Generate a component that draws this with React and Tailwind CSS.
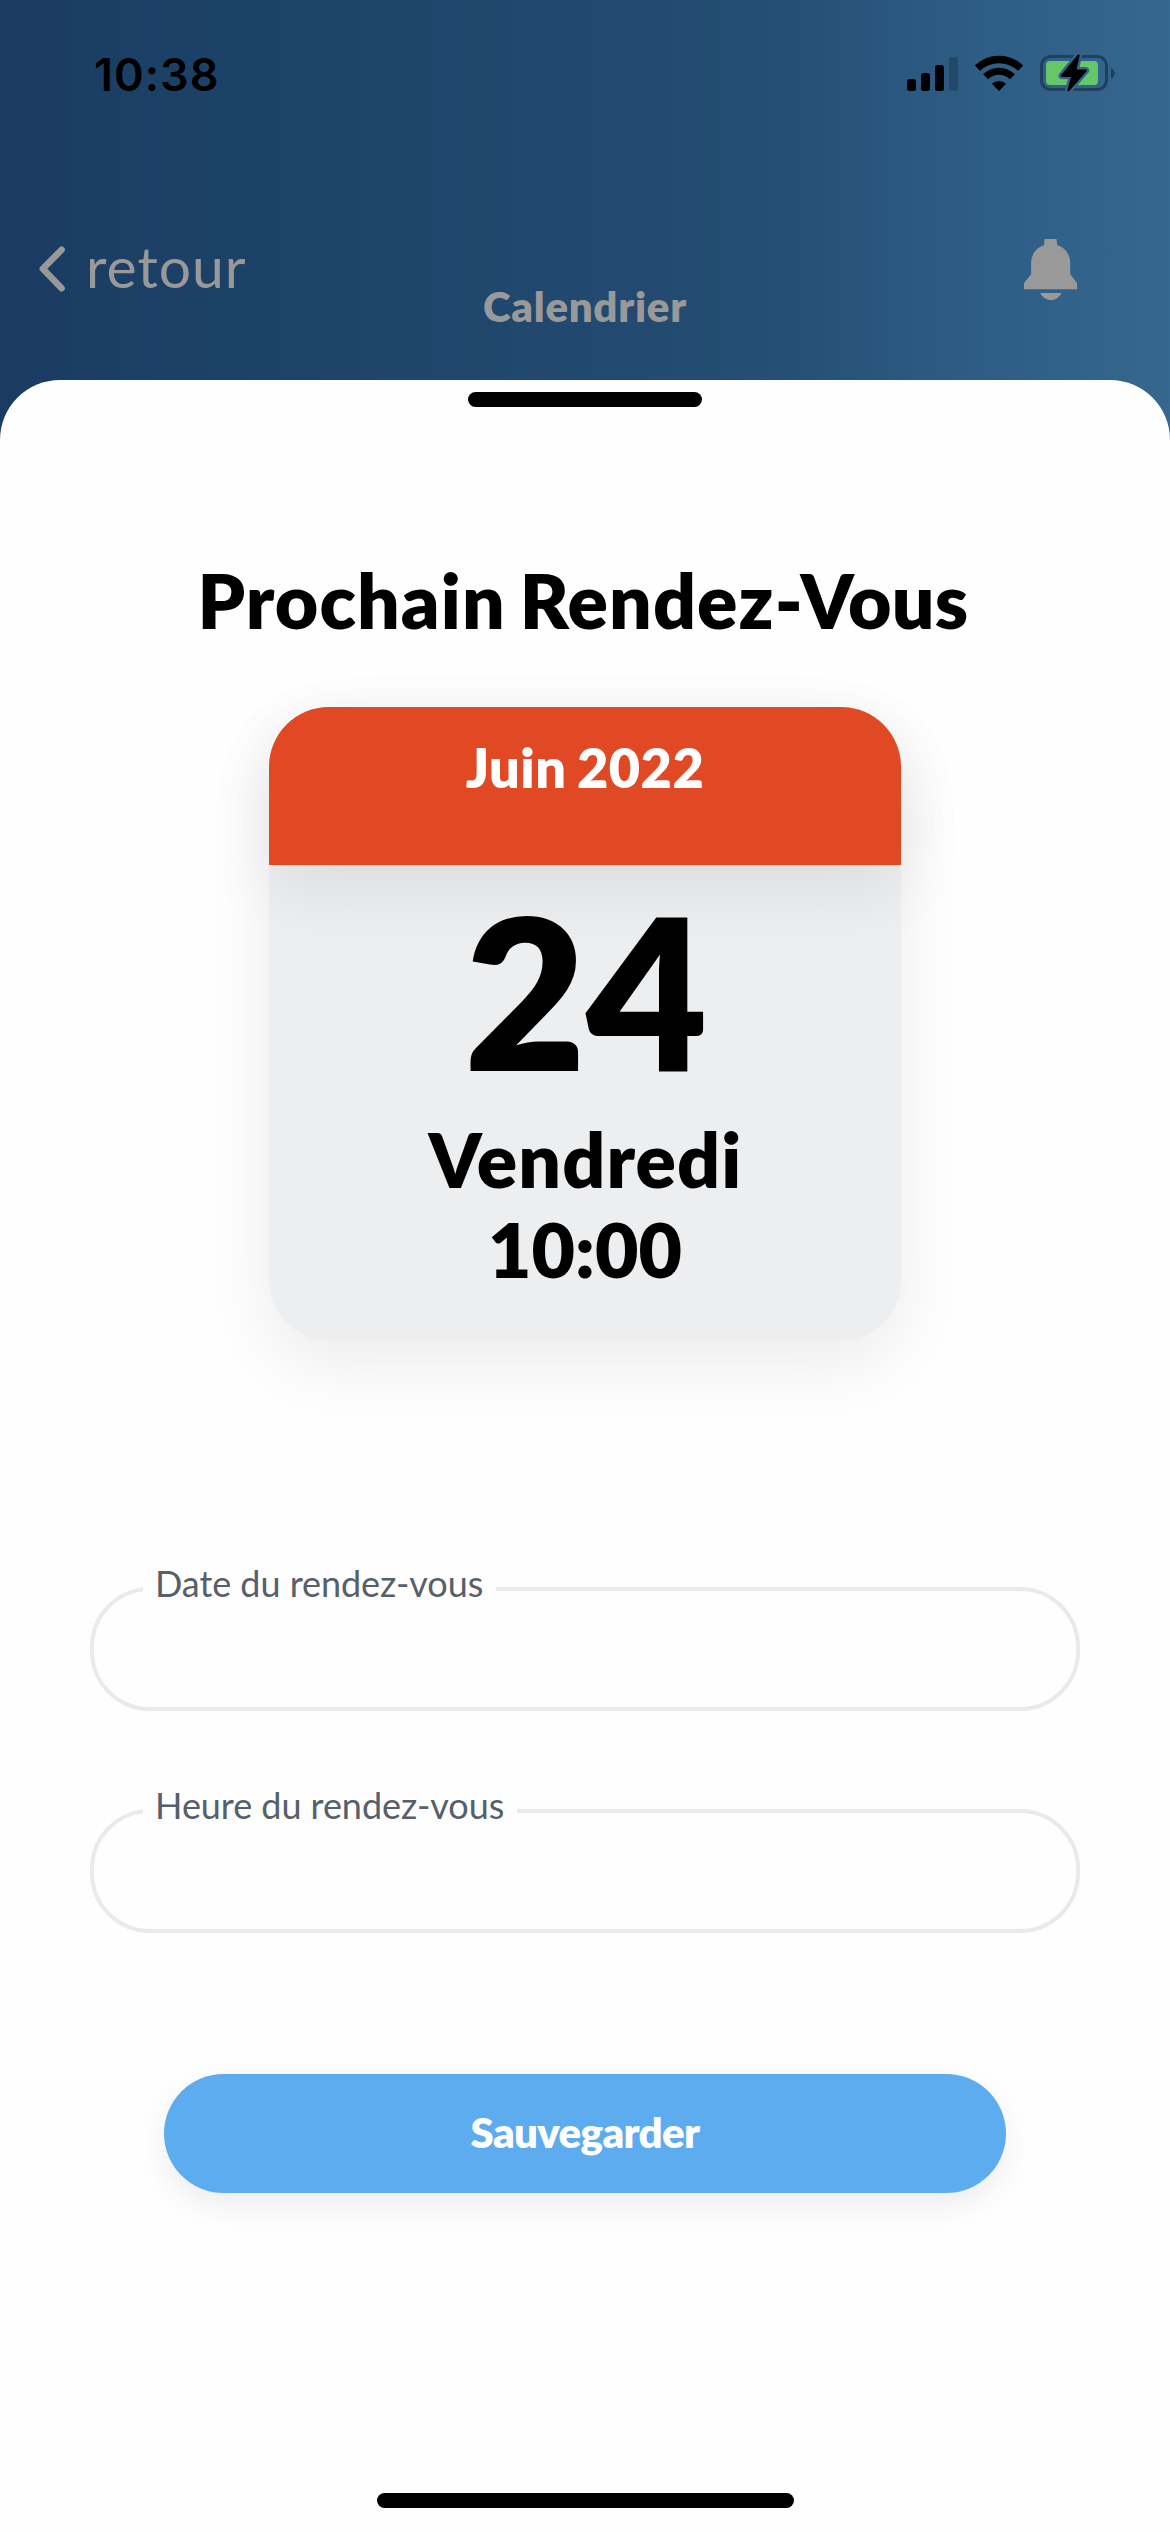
function SignalBars() {
  return (
    <svg className="h-[34px] w-[51px]" viewBox="0 0 51 34" fill="#000">
      <rect x="0" y="22" width="9" height="12" rx="2.5" />
      <rect x="14" y="16" width="9" height="18" rx="2.5" />
      <rect x="28" y="8" width="9" height="26" rx="2.5" />
      <rect x="42" y="0" width="9" height="34" rx="2.5" fill="#24486a" />
    </svg>
  );
}

function Wifi() {
  return (
    <svg className="h-9 w-[50px]" viewBox="0 0 50 36" fill="none">
      <path d="M3.4 13.2A31 31 0 0 1 46.6 13.2" stroke="#000" strokeWidth="7.4" />
      <path d="M11.6 21.8A19 19 0 0 1 38.4 21.8" stroke="#000" strokeWidth="7" />
      <path d="M25 36L17.9 28.8A10.4 10.4 0 0 1 32.1 28.8Z" fill="#000" />
    </svg>
  );
}

function Battery() {
  return (
    <svg className="h-[38px] w-[75px]" viewBox="0 0 75 38">
      <rect x="1.5" y="2.5" width="65" height="33" rx="9" fill="none" stroke="#20405e" strokeWidth="3" />
      <path d="M71 14C76 16.300 76 22.700 71 25Z" fill="#20405e" />
      <rect x="6" y="7" width="52" height="24" rx="4" fill="#67c768" />
      <path
        d="M38.600 1.500L22 21.800H32.500L28.500 36.300L45.700 16.500H35.200Z"
        fill="#000"
        stroke="#31638b"
        strokeWidth="7"
        strokeLinejoin="round"
      />
      <path
        d="M38.600 1.500L22 21.800H32.500L28.500 36.300L45.700 16.500H35.200Z"
        fill="#000"
        stroke="#000"
        strokeWidth="2.200"
        strokeLinejoin="round"
      />
    </svg>
  );
}

function Chevron() {
  return (
    <svg className="h-[46px] w-7" viewBox="0 0 28 46" fill="none">
      <path d="M23.600 3.800L4.800 22.800L23.600 42.200" stroke="#999" strokeWidth="6.500" strokeLinecap="round" strokeLinejoin="round" />
    </svg>
  );
}

function Bell() {
  return (
    <svg className="h-[61px] w-[53px]" viewBox="42 27 157 182" preserveAspectRatio="none" fill="#999">
      <path d="M103 27H138L141 46C165 53 179 75 179 100V132L199 158V177H42V158L63 132V100C63 75 77 53 101 46Z" />
      <path d="M90 188H153C146 202 135 209 121.500 209S97 202 90 188Z" />
    </svg>
  );
}

function Field({ label }) {
  return (
    <div className="relative h-[124px] rounded-[60px] border-4 border-[#e8ebed]">
      <label className="absolute -top-[29px] left-[49px] bg-[#fefefe] pr-[13px] pl-3 text-[36px] leading-[43px] tracking-[-0.050px] whitespace-nowrap text-[#57606a]">
        {label}
      </label>
    </div>
  );
}

export default function App() {
  return (
    <div className="flex h-[2532px] w-[1170px] flex-col overflow-hidden bg-[linear-gradient(90deg,#1a3b62_0%,#1c4167_17%,#1f456b_34%,#22496f_52%,#244e73_65%,#29557c_74%,#2f5f87_87%,#36678f_100%)] font-['Lato',sans-serif]">
      <header className="h-[380px] shrink-0">
        <div className="flex h-[232px] items-start justify-between pr-[55px] pl-[94px]">
          <div className="pt-12 font-['Inter',sans-serif] text-[45px] leading-[54px] font-semibold tracking-[1px] text-black">10:38</div>
          <div className="flex items-start pt-[54px]">
            <div className="pt-[3px]"><SignalBars /></div>
            <div className="ml-4 pt-px"><Wifi /></div>
            <div className="ml-4"><Battery /></div>
          </div>
        </div>
        <div className="grid grid-cols-3 text-[#999]">
          <div className="flex items-start pl-[38px]">
            <div className="pt-[14px]"><Chevron /></div>
            <span className="ml-[20px] text-[57px] leading-[68px] tracking-[1px]">retour</span>
          </div>
          <h2 className="pt-[49px] text-center text-[42px] leading-[50px] font-extrabold tracking-[0.7px]">Calendrier</h2>
          <div className="flex items-start justify-end pt-[7px] pr-[93px]"><Bell /></div>
        </div>
      </header>

      <main className="flex flex-1 flex-col items-center rounded-t-[60px] bg-[#fefefe] pt-3">
        <div className="h-[15px] w-[234px] rounded-full bg-black" />
        <h1 className="mt-[148px] pr-[4px] text-[75px] leading-[90px] font-extrabold tracking-[1.1px] text-black [word-spacing:-4.5px]">
          Prochain Rendez<span className="tracking-[0.3px]">-Vous</span>
        </h1>

        <section className="mt-[62px] h-[633px] w-[632px] rounded-[60px] bg-[#edeef0] text-center font-extrabold text-black shadow-[0_24px_68px_rgba(0,0,0,0.075)]">
          <div className="h-[158px] rounded-t-[60px] bg-[#e14924] pt-[28px] text-[54px] leading-[65px] tracking-[0.5px] text-white shadow-[0_24px_68px_rgba(0,0,0,0.075)] [word-spacing:-2.5px]">
            Juin 2022
          </div>
          <div className="h-[249px] pl-[2px] text-[210px] leading-[250px]">24</div>
          <div className="pl-px text-[75px] leading-[90px] tracking-[1.15px]">Vendredi</div>
          <div className="text-[75px] leading-[90px]">10:00</div>
        </section>

        <form className="mt-[247px] flex w-[990px] flex-col gap-[98px]">
          <Field label="Date du rendez-vous" />
          <Field label="Heure du rendez-vous" />
        </form>

        <button className="mt-[141px] h-[119px] w-[842px] rounded-[60px] bg-[#5dacf0] pb-1 text-[42px] leading-[50px] font-extrabold tracking-[-0.650px] text-white shadow-[0_12px_32px_rgba(0,0,0,0.07)]">
          Sauvegarder
        </button>

        <div className="mt-[300px] h-[15px] w-[417px] rounded-full bg-black" />
      </main>
    </div>
  );
}
